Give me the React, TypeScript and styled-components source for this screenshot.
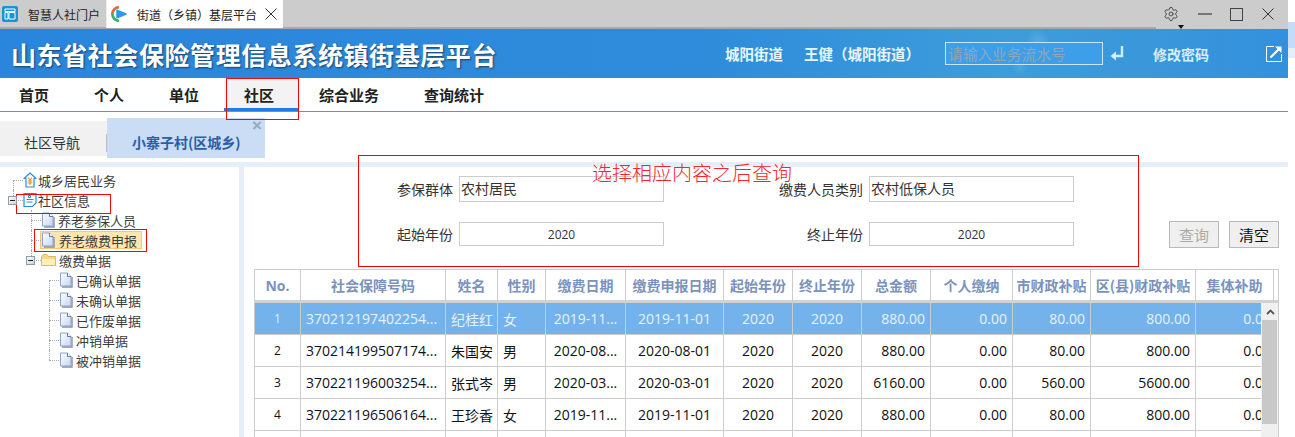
import { ReactNode } from "react";
import styled, { createGlobalStyle } from "styled-components";
import { Settings } from "lucide-react";

const GlobalStyle = createGlobalStyle`
    html, body {
        margin: 0;
        padding: 0;
        background: #fff;
        overflow: hidden;
    }
    * {
        box-sizing: border-box;
    }
`;

const UI_FONT = `"Noto Sans CJK SC", sans-serif`;
const NUM_FONT = `"Open Sans", "Noto Sans CJK SC", sans-serif`;

const Page = styled.div`
    position: relative;
    display: flex;
    width: 1295px;
    height: 437px;
    overflow: hidden;
    font-family: ${UI_FONT};
    color: #333;
`;

const Main = styled.div`
    display: flex;
    flex-direction: column;
    width: 1288px;
    flex: none;
`;

const EdgeStrip = styled.div`
    flex: 1;
    background: linear-gradient(#fff 0 22px, #c5dcf8 22px 48px, #e6eef8 48px 58px, #fff 58px);
`;

const BrowserBar = styled.div`
    display: flex;
    align-items: flex-start;
    height: 29px;
    flex: none;
    background: linear-gradient(#a9a9a9, #a9a9a9) left bottom / 1156px 2px no-repeat #ccc;
`;

const BrowserTab = styled.div<{ $active?: boolean }>`
    display: flex;
    align-items: center;
    height: 28px;
    width: ${(p) => (p.$active ? "176px" : "107px")};
    padding-left: ${(p) => (p.$active ? "4px" : "2px")};
    background: ${(p) => (p.$active ? "#fff" : "transparent")};
    border-right: ${(p) => (p.$active ? "none" : "1px solid #eee")};
    font-size: 12px;
    color: #222;
`;

const TabTitle = styled.span<{ $gap: number }>`
    margin-left: ${(p) => p.$gap}px;
    white-space: nowrap;
`;

const TabClose = styled.span`
    display: flex;
    margin-left: 8px;
`;

const WindowControls = styled.div`
    display: flex;
    align-items: center;
    height: 28px;
    margin-left: auto;
    padding-right: 14px;
    color: #444;
`;

const GearWrap = styled.div`
    position: relative;
    display: flex;
    margin-right: 19px;

    &::after {
        content: "";
        position: absolute;
        right: -5px;
        bottom: -7px;
        border: 3px solid transparent;
        border-top: 4px solid #111;
        border-bottom: none;
    }
`;

const MinLine = styled.div`
    width: 14px;
    height: 2px;
    margin-right: 18px;
    background: #777;
`;

const MaxBox = styled.div`
    width: 13px;
    height: 13px;
    margin-right: 19px;
    border: 1px solid #444;
`;

const Header = styled.header`
    display: flex;
    align-items: center;
    height: 49px;
    flex: none;
    padding-left: 11px;
    color: #fff;
    background:
        radial-gradient(circle 12px at 1038px 12px, rgba(255, 255, 255, 0.14), transparent),
        radial-gradient(circle 8px at 1020px 38px, rgba(255, 255, 255, 0.1), transparent),
        radial-gradient(circle 7px at 1002px 30px, rgba(255, 255, 255, 0.1), transparent),
        linear-gradient(90deg, #2a85dd, #2f8cdb 55%, #3d9dda 78%, #3a98da 88%, #3390dd);
`;

const Title = styled.h1`
    margin: 0;
    font-size: 25px;
    font-weight: 700;
    letter-spacing: 0.58px;
    white-space: nowrap;
    text-shadow: 1px 1px 2px rgba(0, 0, 0, 0.55);
`;

const HeaderText = styled.span<{ $left: number; $tint?: boolean }>`
    margin-left: ${(p) => p.$left}px;
    font-size: ${(p) => (p.$tint ? "14px" : "14.5px")};
    font-weight: 700;
    white-space: nowrap;
    color: ${(p) => (p.$tint ? "#d4effc" : "#e8f6ff")};
`;

const SearchInput = styled.input`
    width: 158px;
    height: 23px;
    margin-left: 25px;
    padding: 0 2px;
    border: 1px solid #c8e6f8;
    outline: none;
    background: #3d9fea;
    font-family: ${UI_FONT};
    font-size: 14.7px;
    color: #fff;

    &::placeholder {
        color: #8ea6b8;
        opacity: 1;
    }
`;

const EnterIcon = styled.svg`
    margin-left: 7px;
`;

const ExternalIcon = styled.svg`
    margin-left: 57px;
`;

const Nav = styled.nav`
    display: flex;
    gap: 45px;
    height: 34px;
    flex: none;
    padding-left: 19px;
    border-bottom: 1px solid #5e92dc;
`;

const NavItem = styled.div<{ $active?: boolean }>`
    position: relative;
    z-index: 0;
    padding-top: 7px;
    font-size: 15px;
    font-weight: 700;
    line-height: 20px;
    color: #222;

    &::after {
        content: "";
        display: ${(p) => (p.$active ? "block" : "none")};
        position: absolute;
        z-index: -1;
        top: 0;
        bottom: 0;
        left: -20px;
        right: -24px;
        background: #f3f3f3;
        border-bottom: 3px solid #1a80e4;
    }
`;

const TabRow = styled.div`
    display: flex;
    align-items: flex-start;
    height: 50px;
    flex: none;
    padding-top: 6px;
`;

const PlainTab = styled.div`
    position: relative;
    width: 107px;
    height: 35px;
    margin-top: 3px;
    padding: 11px 0 0 24px;
    background: #f1f1f1;
    font-size: 14px;
    line-height: 20px;
    color: #333;

    &::after {
        content: "";
        position: absolute;
        right: 0;
        top: 13px;
        height: 18px;
        border-right: 1px solid #bbb;
    }
`;

const ActiveTab = styled.div`
    position: relative;
    width: 158px;
    height: 40px;
    padding: 14px 0 0 25px;
    background: #cbdcf5;
    font-size: 14px;
    font-weight: 700;
    line-height: 20px;
    white-space: nowrap;
    color: #2a5fa8;
`;

const CloseMark = styled.span`
    position: absolute;
    top: 1px;
    right: 3px;
    font-family: "Liberation Sans", sans-serif;
    font-size: 17px;
    font-weight: 700;
    line-height: 14px;
    color: #93acb8;
`;

const Divider = styled.div`
    height: 5px;
    flex: none;
    background: #e6eef8;
`;

const Body = styled.div`
    display: flex;
    flex: 1;
    min-height: 0;
`;

const Sidebar = styled.aside`
    width: 239px;
    flex: none;
    padding-top: 3px;
`;

const Gutter = styled.div`
    width: 5px;
    flex: none;
    background: #e6eef8;
`;

const TreeRow = styled.div<{ $level: number }>`
    display: flex;
    align-items: center;
    height: 20px;
    padding-left: ${(p) => 13 + p.$level * 18}px;
    font-size: 13px;
    white-space: nowrap;
    color: #3c3c3c;
`;

const Stem = styled.span<{ $last?: boolean; $first?: boolean }>`
    position: relative;
    align-self: stretch;
    width: 10px;
    flex: none;

    &::before {
        content: "";
        position: absolute;
        left: 0;
        top: ${(p) => (p.$first ? "50%" : "0")};
        bottom: ${(p) => (p.$last ? "50%" : "0")};
        border-left: 1px dotted #aaa;
    }

    &::after {
        content: "";
        position: absolute;
        left: 0;
        top: 50%;
        width: 10px;
        border-top: 1px dotted #aaa;
    }
`;

const ExpandBox = styled.span`
    position: absolute;
    z-index: 1;
    left: -5px;
    top: 6px;
    width: 9px;
    height: 9px;
    border: 1px solid #8d9bab;
    background: linear-gradient(135deg, #fff, #c9d2dc);

    &::after {
        content: "";
        position: absolute;
        left: 1px;
        right: 1px;
        top: 3px;
        height: 1px;
        background: #222;
    }
`;

const TreeLabel = styled.span<{ $selected?: boolean; $gap: number }>`
    display: flex;
    align-items: center;
    gap: ${(p) => p.$gap}px;
    height: 18px;
    margin-left: ${(p) => (p.$selected ? "-1px" : "0")};
    padding-right: ${(p) => (p.$selected ? "4px" : "0")};
    border: 1px solid ${(p) => (p.$selected ? "#fbc67a" : "transparent")};
    border-left-width: ${(p) => (p.$selected ? "1px" : "0")};
    background: ${(p) => (p.$selected ? "#ffe6b0" : "transparent")};
`;

const Content = styled.main`
    flex: 1;
    min-width: 0;
    padding-left: 10px;
`;

const FilterBar = styled.div`
    display: flex;
    align-items: flex-start;
    height: 102px;
    padding-top: 9px;
`;

const FilterGrid = styled.div`
    display: grid;
    grid-template-columns: 199px 205px 193px 205px;
    grid-template-rows: 26px 24px;
    column-gap: 6px;
    row-gap: 20px;
    align-items: center;
    font-size: 14px;
`;

const FieldLabel = styled.label`
    text-align: right;
    line-height: 20px;
    color: #333;
    white-space: nowrap;
`;

const FieldInput = styled.input<{ $center?: boolean }>`
    width: 100%;
    height: 100%;
    padding: 0 1px ${(p) => (p.$center ? "0" : "3px")};
    border: 1px solid #ccc;
    outline: none;
    font-family: ${(p) => (p.$center ? NUM_FONT : UI_FONT)};
    font-size: ${(p) => (p.$center ? "12px" : "14px")};
    text-align: ${(p) => (p.$center ? "center" : "left")};
    color: #333;
`;

const Actions = styled.div`
    display: flex;
    gap: 10px;
    margin: 45px 0 0 95px;
`;

const ActionButton = styled.button`
    width: 50px;
    height: 27px;
    padding: 0;
    border: 1px solid #b9b9b9;
    background: #efefef;
    font-family: ${UI_FONT};
    font-size: 15px;
    color: #111;

    &:disabled {
        color: #aaa;
    }
`;

const TableFrame = styled.div`
    position: relative;
    width: 1025px;
    height: 168px;
    overflow: hidden;
`;

const Grid = styled.table`
    width: 1025px;
    table-layout: fixed;
    border-collapse: separate;
    border-spacing: 0;
    font-family: ${NUM_FONT};
    font-size: 14px;
`;

const HeadCell = styled.th`
    height: 34px;
    padding: 0;
    border-top: 1px solid #ccc;
    border-right: 1px solid #ccc;
    border-bottom: 3px solid #d2d2d2;
    font-family: ${UI_FONT};
    font-size: 14px;
    font-weight: 700;
    text-align: center;
    white-space: nowrap;
    color: #7b92bd;

    &:first-child {
        border-left: 1px solid #ccc;
    }
`;

const NoHead = styled(HeadCell)`
    font-family: ${NUM_FONT};
`;

const Row = styled.tr<{ $selected?: boolean }>`
    background: ${(p) => (p.$selected ? "#74b2ec" : "#fff")};
    color: ${(p) => (p.$selected ? "#e6f2fd" : "#111")};
`;

const Cell = styled.td<{ $align?: "left" | "center" | "right"; $small?: boolean; $tight?: boolean }>`
    height: 32px;
    padding: 0 ${(p) => (p.$tight ? "2px" : "5px")} 0 5px;
    border-right: 1px solid #ccc;
    border-bottom: 1px solid #ccc;
    font-size: ${(p) => (p.$small ? "12px" : "14px")};
    text-align: ${(p) => p.$align ?? "left"};
    white-space: nowrap;
    overflow: hidden;

    &:first-child {
        border-left: 1px solid #ccc;
    }
`;

const ScrollBar = styled.div`
    position: absolute;
    top: 34px;
    right: 0;
    bottom: 0;
    width: 18px;
    padding-left: 1px;
    background: #f0f0f0;
    border-right: 1px solid #ccc;
`;

const ScrollArrow = styled.div`
    display: flex;
    align-items: center;
    justify-content: center;
    height: 17px;
`;

const ScrollThumb = styled.div`
    width: 15px;
    height: 104px;
    background: #c8c8c8;
`;

const Mark = styled.div<{ $x: number; $y: number; $w: number; $h: number }>`
    position: absolute;
    left: ${(p) => p.$x}px;
    top: ${(p) => p.$y}px;
    width: ${(p) => p.$w}px;
    height: ${(p) => p.$h}px;
    border: 1px solid #f00;
    pointer-events: none;
`;

const MarkNote = styled.div`
    position: absolute;
    left: 592px;
    top: 161px;
    font-size: 20px;
    font-weight: 300;
    line-height: 24px;
    white-space: nowrap;
    color: #f6262e;
`;

function PortalIcon() {
    return (
        <svg width="16" height="16" viewBox="0 0 16 16">
            <rect width="16" height="16" rx="2" fill="#1594d6" />
            <path d="M3 3h10v2.5H3zM3 6.5h3v6.5H3zM7 6.5h6v6.5H7z" fill="none" stroke="#fff" strokeWidth="1" />
        </svg>
    );
}

function PlatformIcon() {
    return (
        <svg width="16" height="18" viewBox="0 0 16 18">
            <path d="M8 2.2A6.8 6.8 0 0 0 1.4 9" fill="none" stroke="#e86a3a" strokeWidth="2.8" />
            <path d="M1.4 9A6.8 6.8 0 0 0 8 15.8" fill="none" stroke="#3bb16c" strokeWidth="2.8" />
            <path d="M6 5.2l9 3.8-9 3.8z" fill="#2a9be8" stroke="#2a9be8" strokeWidth="1.5" strokeLinejoin="round" />
        </svg>
    );
}

function XIcon({ size }: { size: number }) {
    return (
        <svg width={size} height={size} viewBox="0 0 12 12">
            <path d="M.5.5l11 11M11.5.5l-11 11" stroke="#333" strokeWidth="1" />
        </svg>
    );
}

function HomeIcon() {
    return (
        <svg width="14" height="16" viewBox="0 0 14 16">
            <path d="M7 1L1 6.5h2V15h8V6.5h2z" fill="#fff" stroke="#1f8fe0" strokeWidth="1.2" strokeLinejoin="round" />
            <path d="M5 5.5l2 2.5 2-2.5M4.8 9h4.4M4.8 11h4.4M7 8v5" fill="none" stroke="#f08a24" strokeWidth="1.1" />
        </svg>
    );
}

function InfoIcon() {
    return (
        <svg width="14" height="16" viewBox="0 0 14 16">
            <path d="M1 1.5h12v9.5l-3.5 3.5H1z" fill="#fff" stroke="#1f8fe0" strokeWidth="1.2" />
            <path d="M5.5 3.5h2v2h-2zM3.5 7.5h7M3.5 10h6" fill="none" stroke="#1f8fe0" strokeWidth="1" />
        </svg>
    );
}

function DocIcon() {
    return (
        <svg width="14" height="16" viewBox="0 0 14 16">
            <defs>
                <linearGradient id="docFill" x1="0" y1="0" x2="1" y2="1">
                    <stop offset="0" stopColor="#fff" />
                    <stop offset="1" stopColor="#c4d6f2" />
                </linearGradient>
            </defs>
            <path d="M3 15h10V5" fill="none" stroke="#8c8fa8" strokeWidth="1.4" />
            <path d="M1.5 1h7l3.5 3.5V14H1.5z" fill="url(#docFill)" stroke="#8ea4c8" strokeWidth="1" />
            <path d="M8.5 1v3.5H12" fill="#fff" stroke="#5f78a0" strokeWidth="1" />
        </svg>
    );
}

function FolderIcon() {
    return (
        <svg width="15" height="14" viewBox="0 0 15 14">
            <path d="M.5 3.5L2 1.5h4l1.5 2h7v9H.5z" fill="#f3da8a" stroke="#d8bb62" strokeWidth="1" />
            <path d="M1 6h13v6H1z" fill="#fdf0b8" />
        </svg>
    );
}

const COLUMNS = [47, 145, 52, 48, 80, 98, 69, 69, 69, 82, 78, 105, 78, 5];

const HEADINGS = [
    "社会保障号码",
    "姓名",
    "性别",
    "缴费日期",
    "缴费申报日期",
    "起始年份",
    "终止年份",
    "总金额",
    "个人缴纳",
    "市财政补贴",
    "区(县)财政补贴",
    "集体补助",
    "",
];

const ROWS = [
    ["1", "370212197402254...", "纪桂红", "女", "2019-11...", "2019-11-01", "880.00", "80.00", "800.00"],
    ["2", "370214199507174...", "朱国安", "男", "2020-08...", "2020-08-01", "880.00", "80.00", "800.00"],
    ["3", "370221196003254...", "张式岑", "男", "2020-03...", "2020-03-01", "6160.00", "560.00", "5600.00"],
    ["4", "370221196506164...", "王珍香", "女", "2019-11...", "2019-11-01", "880.00", "80.00", "800.00"],
];

function Leaf({ label, last, first }: { label: string; last?: boolean; first?: boolean }) {
    return (
        <TreeRow $level={2}>
            <Stem $last={last} $first={first} />
            <TreeLabel $gap={3}>
                <DocIcon />
                {label}
            </TreeLabel>
        </TreeRow>
    );
}

function Branch({ children, gap, selected }: { children: ReactNode; gap: number; selected?: boolean }) {
    return (
        <TreeLabel $gap={gap} $selected={selected}>
            {children}
        </TreeLabel>
    );
}

function App() {
    return (
        <Page>
            <GlobalStyle />
            <Main>
                <BrowserBar>
                    <BrowserTab>
                        <PortalIcon />
                        <TabTitle $gap={10}>智慧人社门户</TabTitle>
                    </BrowserTab>
                    <BrowserTab $active>
                        <PlatformIcon />
                        <TabTitle $gap={10}>街道（乡镇）基层平台</TabTitle>
                        <TabClose>
                            <XIcon size={12} />
                        </TabClose>
                    </BrowserTab>
                    <WindowControls>
                        <GearWrap>
                            <Settings size={16} strokeWidth={1.4} />
                        </GearWrap>
                        <MinLine />
                        <MaxBox />
                        <XIcon size={12} />
                    </WindowControls>
                </BrowserBar>

                <Header>
                    <Title>山东省社会保险管理信息系统镇街基层平台</Title>
                    <HeaderText $left={228}>城阳街道</HeaderText>
                    <HeaderText $left={21}>王健（城阳街道）</HeaderText>
                    <SearchInput placeholder="请输入业务流水号" />
                    <EnterIcon width="14" height="18" viewBox="0 0 14 18">
                        <path d="M12 1v10H5" fill="none" stroke="#cfeefc" strokeWidth="2.4" />
                        <path d="M6 6.5L.5 11 6 15.5z" fill="#cfeefc" />
                    </EnterIcon>
                    <HeaderText $left={29} $tint>
                        修改密码
                    </HeaderText>
                    <ExternalIcon width="16" height="16" viewBox="0 0 16 16">
                        <path d="M8 .5H.5v15h15V8" fill="none" stroke="#fff" strokeWidth="1" />
                        <path d="M4.5 11.5L14 2" fill="none" stroke="#fff" strokeWidth="2" />
                        <path d="M9 .5h6.5V7z" fill="#fff" />
                    </ExternalIcon>
                </Header>

                <Nav>
                    <NavItem>首页</NavItem>
                    <NavItem>个人</NavItem>
                    <NavItem>单位</NavItem>
                    <NavItem $active>社区</NavItem>
                    <NavItem>综合业务</NavItem>
                    <NavItem>查询统计</NavItem>
                </Nav>

                <TabRow>
                    <PlainTab>社区导航</PlainTab>
                    <ActiveTab>
                        小寨子村(区城乡)
                        <CloseMark>×</CloseMark>
                    </ActiveTab>
                </TabRow>
                <Divider />

                <Body>
                    <Sidebar>
                        <TreeRow $level={0}>
                            <Stem $first />
                            <Branch gap={1}>
                                <HomeIcon />
                                城乡居民业务
                            </Branch>
                        </TreeRow>
                        <TreeRow $level={0}>
                            <Stem $last>
                                <ExpandBox />
                            </Stem>
                            <Branch gap={1}>
                                <InfoIcon />
                                社区信息
                            </Branch>
                        </TreeRow>
                        <TreeRow $level={1}>
                            <Stem />
                            <Branch gap={3}>
                                <DocIcon />
                                养老参保人员
                            </Branch>
                        </TreeRow>
                        <TreeRow $level={1}>
                            <Stem />
                            <Branch gap={4} selected>
                                <DocIcon />
                                养老缴费申报
                            </Branch>
                        </TreeRow>
                        <TreeRow $level={1}>
                            <Stem $last>
                                <ExpandBox />
                            </Stem>
                            <Branch gap={3}>
                                <FolderIcon />
                                缴费单据
                            </Branch>
                        </TreeRow>
                        <Leaf label="已确认单据" first />
                        <Leaf label="未确认单据" />
                        <Leaf label="已作废单据" />
                        <Leaf label="冲销单据" />
                        <Leaf label="被冲销单据" last />
                    </Sidebar>
                    <Gutter />
                    <Content>
                        <FilterBar>
                            <FilterGrid>
                                <FieldLabel>参保群体</FieldLabel>
                                <FieldInput defaultValue="农村居民" readOnly />
                                <FieldLabel>缴费人员类别</FieldLabel>
                                <FieldInput defaultValue="农村低保人员" readOnly />
                                <FieldLabel>起始年份</FieldLabel>
                                <FieldInput $center defaultValue="2020" readOnly />
                                <FieldLabel>终止年份</FieldLabel>
                                <FieldInput $center defaultValue="2020" readOnly />
                            </FilterGrid>
                            <Actions>
                                <ActionButton disabled>查询</ActionButton>
                                <ActionButton>清空</ActionButton>
                            </Actions>
                        </FilterBar>

                        <TableFrame>
                            <Grid>
                                <colgroup>
                                    {COLUMNS.map((w, i) => (
                                        <col key={i} width={w} />
                                    ))}
                                </colgroup>
                                <thead>
                                    <tr>
                                        <NoHead>No.</NoHead>
                                        {HEADINGS.map((h, i) => (
                                            <HeadCell key={i}>{h}</HeadCell>
                                        ))}
                                    </tr>
                                </thead>
                                <tbody>
                                    {ROWS.map((r, i) => (
                                        <Row key={r[0]} $selected={i === 0}>
                                            <Cell $align="center" $small>
                                                {r[0]}
                                            </Cell>
                                            <Cell>{r[1]}</Cell>
                                            <Cell>{r[2]}</Cell>
                                            <Cell>{r[3]}</Cell>
                                            <Cell $align="center">{r[4]}</Cell>
                                            <Cell $align="center">{r[5]}</Cell>
                                            <Cell $align="center">2020</Cell>
                                            <Cell $align="center">2020</Cell>
                                            <Cell $align="right">{r[6]}</Cell>
                                            <Cell $align="right">0.00</Cell>
                                            <Cell $align="right">{r[7]}</Cell>
                                            <Cell $align="right">{r[8]}</Cell>
                                            <Cell $align="right" $tight>
                                                0.00
                                            </Cell>
                                            <Cell />
                                        </Row>
                                    ))}
                                    <Row>
                                        {COLUMNS.map((_, i) => (
                                            <Cell key={i} />
                                        ))}
                                    </Row>
                                </tbody>
                            </Grid>
                            <ScrollBar>
                                <ScrollArrow>
                                    <svg width="9" height="6" viewBox="0 0 9 6">
                                        <path d="M1 5l3.5-3.5L8 5" fill="none" stroke="#555" strokeWidth="1.8" />
                                    </svg>
                                </ScrollArrow>
                                <ScrollThumb />
                            </ScrollBar>
                        </TableFrame>
                    </Content>
                </Body>
            </Main>
            <EdgeStrip />

            <Mark $x={226} $y={78} $w={73} $h={42} />
            <Mark $x={358} $y={155} $w={781} $h={112} />
            <Mark $x={16} $y={194} $w={95} $h={20} />
            <Mark $x={34} $y={229} $w={113} $h={23} />
            <MarkNote>选择相应内容之后查询</MarkNote>
        </Page>
    );
}

export default App;
